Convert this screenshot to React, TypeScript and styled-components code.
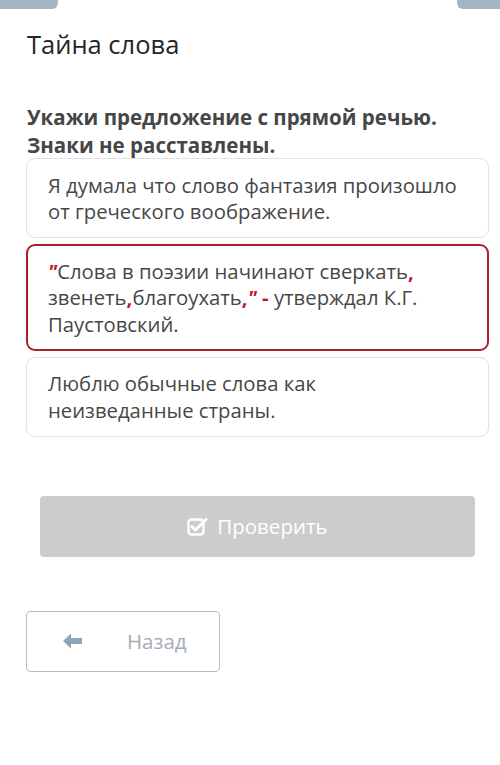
import styled, { createGlobalStyle } from "styled-components";

const GlobalStyle = createGlobalStyle`
  html, body {
    margin: 0;
    padding: 0;
    background: #ffffff;
    font-family: "Open Sans", "Noto Sans", sans-serif;
  }
`;

//#region --- Page styles ---
const Page = styled.main`
  position: relative;
  width: 500px;
  height: 765px;
  overflow: hidden;
  box-sizing: border-box;
  padding: 26px 11px 0 26px;
`;

const Tab = styled.div<{ $side: "left" | "right" }>`
  position: absolute;
  top: 0;
  height: 9px;
  background: #a3b6c6;
  ${({ $side }) =>
    $side === "left"
      ? "left: 0; width: 58px; border-bottom-right-radius: 6px;"
      : "right: 0; width: 43px; border-bottom-left-radius: 6px;"}
`;

const Title = styled.h1`
  margin: 0 0 0 1px;
  font-size: 25.5px;
  font-weight: 400;
  line-height: 36px;
  color: #252525;
`;

const Question = styled.p`
  margin: 41px 0 0 1px;
  font-size: 20.5px;
  font-weight: 700;
  line-height: 28px;
  color: #464646;
`;

const Options = styled.div`
  display: flex;
  flex-direction: column;
  gap: 5.5px;
  margin-top: -1px;
`;

const Option = styled.div<{ $selected?: boolean }>`
  box-sizing: border-box;
  padding: ${({ $selected }) => ($selected ? "12px 20px" : "12.5px 21px")};
  border: ${({ $selected }) => ($selected ? "2px solid #a8202a" : "1px solid #e2e2e2")};
  border-radius: 9px;
  font-size: 20.3px;
  line-height: 26.5px;
  color: #474747;
  background: #ffffff;
`;

const Mark = styled.span<{ $quote?: boolean }>`
  color: #c8102e;
  font-weight: 700;
  ${({ $quote }) => ($quote ? "font-style: italic;" : "")}
`;

const CheckButton = styled.button`
  display: flex;
  align-items: center;
  justify-content: center;
  gap: 9px;
  width: 435px;
  height: 61px;
  margin: 59px 0 0 14px;
  border: none;
  border-radius: 4px;
  background: #cccccc;
  color: #ffffff;
  font-family: inherit;
  font-size: 20.5px;
  padding: 0;
`;

const BackButton = styled.button`
  display: flex;
  align-items: center;
  box-sizing: border-box;
  width: 194px;
  height: 61px;
  margin-top: 54px;
  padding: 0 0 0 35px;
  border: 1px solid #b7bcc1;
  border-radius: 4px;
  background: #ffffff;
  color: #a4adb6;
  font-family: inherit;
  font-size: 20.5px;
  gap: 44px;
`;
//#endregion

const CheckIcon = () => (
  <svg width="21" height="19" viewBox="0 0 21 19" fill="none">
    <rect x="1.5" y="2.5" width="15" height="15" rx="3" stroke="#fff" strokeWidth="2.4" />
    <path d="M5 9.5 L8.5 13 L19 2.5" stroke="#fff" strokeWidth="3" strokeLinecap="round" strokeLinejoin="round" />
  </svg>
);

const ArrowIcon = () => (
  <svg width="21" height="18" viewBox="0 0 21 18">
    <path d="M1 9 L9 1.5 L9 6 L20 6 L20 12 L9 12 L9 16.5 Z" fill="#8ea5b8" strokeLinejoin="round" />
  </svg>
);

const App = () => (
  <>
    <GlobalStyle />
    <Page>
      <Tab $side="left" />
      <Tab $side="right" />
      <Title>Тайна слова</Title>
      <Question>
        Укажи предложение с прямой речью.
        <br />
        Знаки не расставлены.
      </Question>
      <Options>
        <Option>
          Я думала что слово фантазия произошло
          <br />
          от греческого воображение.
        </Option>
        <Option $selected>
          <Mark $quote>"</Mark>Слова в поэзии начинают сверкать<Mark>,</Mark>
          <br />
          звенеть<Mark>,</Mark>благоухать<Mark>,</Mark><Mark $quote>"</Mark> <Mark>-</Mark> утверждал К.Г.
          <br />
          Паустовский.
        </Option>
        <Option>
          Люблю обычные слова как
          <br />
          неизведанные страны.
        </Option>
      </Options>
      <CheckButton>
        <CheckIcon />
        Проверить
      </CheckButton>
      <BackButton>
        <ArrowIcon />
        Назад
      </BackButton>
    </Page>
  </>
);

export default App;
